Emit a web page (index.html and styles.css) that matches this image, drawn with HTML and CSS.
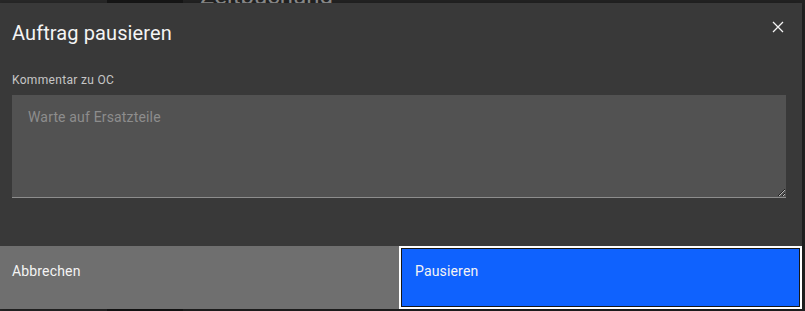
FILE: index.html
```html
<!DOCTYPE html>
<html lang="de">
<head>
    <meta charset="UTF-8">
    <meta name="viewport" content="width=device-width, initial-scale=1.0">
    <title>Auftrag pausieren</title>
    <link rel="stylesheet" href="styles.css">
</head>
<body>
    <!-- Page behind the overlay -->
    <div class="page">
        <div class="page-side"></div>
        <div class="page-gap"></div>
        <div class="page-main">
            <h2 class="page-title">Zeitbuchung</h2>
        </div>
    </div>

    <!-- Modal -->
    <div class="overlay">
        <div class="modal" role="dialog" aria-labelledby="modal-title">
            <div class="modal-header">
                <h3 id="modal-title" class="modal-title">Auftrag pausieren</h3>
                <button class="modal-close" aria-label="Schließen">
                    <svg width="16" height="16" viewBox="0 0 16 16" fill="none" stroke="#f4f4f4" stroke-width="1.3">
                        <path d="M3 3 L13 13 M13 3 L3 13"/>
                    </svg>
                </button>
            </div>
            <div class="modal-content">
                <label class="field-label" for="comment">Kommentar zu OC</label>
                <textarea id="comment" class="field-textarea" placeholder="Warte auf Ersatzteile"></textarea>
            </div>
            <div class="modal-footer">
                <button class="btn btn-secondary">Abbrechen</button>
                <button class="btn btn-primary">Pausieren</button>
            </div>
        </div>
    </div>
</body>
</html>
```

FILE: styles.css
```css
* {
    box-sizing: border-box;
    margin: 0;
    padding: 0;
}
body {
    font-family: Roboto, 'Noto Sans', sans-serif;
    background: #1c1c1c;
    color: #f4f4f4;
    width: 805px;
    height: 311px;
    overflow: hidden;
    position: relative;
}

/* Page behind */
.page {
    display: flex;
    height: 100%;
}
.page-side {
    width: 107px;
    background: #282828;
}
.page-gap {
    width: 76px;
    background: #161616;
}
.page-main {
    flex: 1;
    background: #222;
    padding: 0 0 0 17px;
}
.page-title {
    font-size: 24px;
    font-weight: 400;
    color: #8d8d8d;
    margin-top: -18px;
}

/* Overlay */
.overlay {
    position: absolute;
    top: 3px;
    left: 0;
}
.modal {
    width: 802px;
    height: 306px;
    background: #393939;
    display: flex;
    flex-direction: column;
    box-shadow: 0 2px 6px rgba(0, 0, 0, 0.3);
}
.modal-header {
    position: relative;
    padding: 16px 48px 0 12px;
    margin-bottom: 25px;
}
.modal-title {
    font-size: 20px;
    font-weight: 400;
    line-height: 28px;
    letter-spacing: 0.1px;
    color: #f4f4f4;
}
.modal-close {
    position: absolute;
    top: 0;
    right: 0;
    width: 48px;
    height: 48px;
    background: none;
    border: none;
    display: flex;
    align-items: center;
    justify-content: center;
    cursor: pointer;
}

.modal-content {
    padding: 0 16px 0 12px;
}
.field-label {
    display: block;
    font-size: 12px;
    line-height: 16px;
    letter-spacing: 0.32px;
    color: #c6c6c6;
    margin-bottom: 7px;
}
.field-textarea {
    display: block;
    width: 100%;
    height: 103px;
    background: #525252;
    border: none;
    border-bottom: 1px solid #8d8d8d;
    padding: 13px 16px;
    font-family: inherit;
    font-size: 14px;
    line-height: 18px;
    letter-spacing: 0.16px;
    color: #f4f4f4;
    outline: none;
}
.field-textarea::placeholder {
    color: #8d8d8d;
}

/* Footer */
.modal-footer {
    margin-top: auto;
    height: 63px;
    display: flex;
}
.btn {
    flex: 1;
    border: none;
    text-align: left;
    font-family: inherit;
    font-size: 14px;
    line-height: 18px;
    letter-spacing: 0.16px;
    color: #f4f4f4;
    padding: 16px 16px;
    display: flex;
    align-items: flex-start;
    cursor: pointer;
}
.btn-secondary {
    background: #6f6f6f;
    padding-left: 12px;
}
.btn-primary {
    background: #0f62fe;
    border: 2px solid #fff;
    box-shadow: inset 0 0 0 1px #161616;
    padding: 14px 14px;
}
```
